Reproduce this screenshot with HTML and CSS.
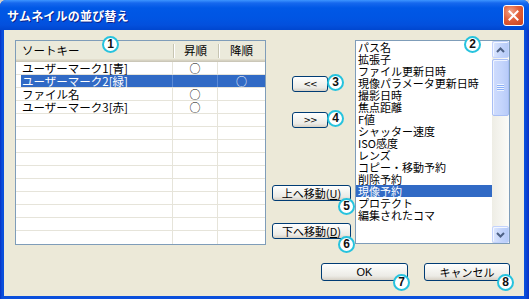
FILE: index.html
```html
<!DOCTYPE html>
<html lang="ja">
<head>
<meta charset="utf-8">
<title>サムネイルの並び替え</title>
<link rel="stylesheet" href="styles.css">
</head>
<body>
<div class="window">
  <div class="titlebar">
    <span class="title">サムネイルの並び替え</span>
    <button class="close" aria-label="閉じる">
      <svg width="11" height="11" viewBox="0 0 11 11"><path d="M1.5 1.5 L9.5 9.5 M9.5 1.5 L1.5 9.5" stroke="#fff" stroke-width="2" stroke-linecap="square"/></svg>
    </button>
  </div>
  <div class="body">
    <div class="toprow">
      <div class="table">
        <div class="thead">
          <div class="th c0">ソートキー</div>
          <div class="th c1 sep">昇順</div>
          <div class="th c2 sep">降順</div>
        </div>
        <div class="row"><div class="cell c0">ユーザーマーク1[青]</div><div class="cell c1">○</div><div class="cell c2"></div></div>
        <div class="row selected"><div class="cell c0">ユーザーマーク2[緑]</div><div class="cell c1"></div><div class="cell c2">○</div></div>
        <div class="row"><div class="cell c0">ファイル名</div><div class="cell c1">○</div><div class="cell c2"></div></div>
        <div class="row"><div class="cell c0">ユーザーマーク3[赤]</div><div class="cell c1">○</div><div class="cell c2"></div></div>
        <div class="row"><div class="cell c0"></div><div class="cell c1"></div><div class="cell c2"></div></div>
        <div class="row"><div class="cell c0"></div><div class="cell c1"></div><div class="cell c2"></div></div>
        <div class="row"><div class="cell c0"></div><div class="cell c1"></div><div class="cell c2"></div></div>
        <div class="row"><div class="cell c0"></div><div class="cell c1"></div><div class="cell c2"></div></div>
        <div class="row"><div class="cell c0"></div><div class="cell c1"></div><div class="cell c2"></div></div>
        <div class="row"><div class="cell c0"></div><div class="cell c1"></div><div class="cell c2"></div></div>
        <div class="row"><div class="cell c0"></div><div class="cell c1"></div><div class="cell c2"></div></div>
        <div class="row"><div class="cell c0"></div><div class="cell c1"></div><div class="cell c2"></div></div>
        <div class="row"><div class="cell c0"></div><div class="cell c1"></div><div class="cell c2"></div></div>
        <div class="row last"><div class="cell c0"></div><div class="cell c1"></div><div class="cell c2"></div></div>
      </div>
      <div class="mid">
        <button class="btn arrow first">&lt;&lt;</button>
        <button class="btn arrow second">&gt;&gt;</button>
        <button class="btn move up">上へ移動(<u>U</u>)</button>
        <button class="btn move down">下へ移動(<u>D</u>)</button>
      </div>
      <div class="listbox">
        <ul class="items">
          <li>パス名</li>
          <li>拡張子</li>
          <li>ファイル更新日時</li>
          <li>現像パラメータ更新日時</li>
          <li>撮影日時</li>
          <li>焦点距離</li>
          <li>F値</li>
          <li>シャッター速度</li>
          <li>ISO感度</li>
          <li>レンズ</li>
          <li>コピー・移動予約</li>
          <li>削除予約</li>
          <li class="sel">現像予約</li>
          <li>プロテクト</li>
          <li>編集されたコマ</li>
        </ul>
        <div class="scrollbar">
          <div class="sb-btn">
            <svg width="9" height="6" viewBox="0 0 9 6"><path d="M1 5 L4.5 1.5 L8 5" fill="none" stroke="#4D6185" stroke-width="2"/></svg>
          </div>
          <div class="sb-track">
            <div class="sb-thumb"><span class="grip"></span></div>
          </div>
          <div class="sb-btn">
            <svg width="9" height="6" viewBox="0 0 9 6"><path d="M1 1 L4.5 4.5 L8 1" fill="none" stroke="#4D6185" stroke-width="2"/></svg>
          </div>
        </div>
      </div>
    </div>
    <div class="bottom">
      <button class="btn big ok">OK</button>
      <button class="btn big cancel">キャンセル</button>
    </div>
  </div>
  <span class="callout n1">1</span>
  <span class="callout n2">2</span>
  <span class="callout n3">3</span>
  <span class="callout n4">4</span>
  <span class="callout n5">5</span>
  <span class="callout n6">6</span>
  <span class="callout n7">7</span>
  <span class="callout n8">8</span>
</div>
</body>
</html>
```

FILE: styles.css
```css
* { box-sizing: border-box; }

html, body {
  margin: 0;
  padding: 0;
  background: #d4d0c8;
}

.window {
  position: relative;
  width: 529px;
  height: 299px;
  display: flex;
  flex-direction: column;
  background: linear-gradient(to right, #0831c4 0px, #0a4fdc 2px, #0a4fdc 525px, #0831c4 529px);
  border-radius: 6px 6px 0 0;
  overflow: hidden;
  font-family: "Noto Sans CJK JP", "Liberation Sans", sans-serif;
  font-size: 11px;
  color: #000;
}

.titlebar {
  height: 30px;
  flex: none;
  display: flex;
  align-items: center;
  padding: 0 5px 0 7px;
  background: linear-gradient(#3d95ff 0px, #1668ee 3px, #0058e6 8px, #0055e3 18px, #0350dd 25px, #0046cf 30px);
}

.title {
  color: #fff;
  font-weight: bold;
  font-size: 12px;
  letter-spacing: 0.2px;
  text-shadow: 1px 1px 0 #0a1f8a;
  line-height: 14px;
  padding-top: 1px;
}

.close {
  margin-left: auto;
  width: 21px;
  height: 21px;
  padding: 0;
  border: 1px solid #fff;
  border-radius: 3px;
  background: radial-gradient(circle at 35% 30%, #f1a58a 0%, #e2603a 45%, #c9401c 100%);
  display: flex;
  align-items: center;
  justify-content: center;
  margin-top: 1px;
}

.body {
  flex: 1;
  margin: 0 5px 3px 4px;
  background: #ece9d8;
  padding: 10px 14px 0 11px;
  display: flex;
  flex-direction: column;
}

.toprow {
  display: flex;
  align-items: flex-start;
}

/* ---------- list view ---------- */
.table {
  width: 251px;
  border: 1px solid #7f9db9;
  background: #fff;
}

.thead {
  display: grid;
  grid-template-columns: 157px 45px 47px;
  height: 21px;
  background: #ebeadb;
  box-shadow: inset 0 -1px #cbc7b8, inset 0 -2px #d6d2c2, inset 0 -3px #e2decd;
}

.th {
  line-height: 18px;
  font-size: 11.5px;
  padding-bottom: 2px;
}

.th.c0 { padding-left: 6px; }
.th.c1, .th.c2 { text-align: center; }

.th.sep {
  background:
    linear-gradient(#c7c5b2, #c7c5b2) 0 3px / 1px 14px no-repeat,
    linear-gradient(#ffffff, #ffffff) 1px 3px / 1px 14px no-repeat;
}

.row {
  display: grid;
  grid-template-columns: 157px 45px 47px;
  height: 13px;
  border-bottom: 1px solid #e6e4da;
}

.row.last { border-bottom: none; }

.cell {
  line-height: 12px;
  font-size: 11.5px;
  white-space: nowrap;
}

.cell.c0 {
  padding-left: 6px;
  border-right: 1px solid #e6e4da;
}

.cell.c1 {
  text-align: center;
  border-right: 1px solid #e6e4da;
  font-size: 11px;
}

.cell.c2 {
  text-align: center;
  font-size: 11px;
}

.row.selected {
  color: #fff;
}

.row.selected .cell.c0 {
  background: linear-gradient(to right, #fff 0 5px, #316ac5 5px);
  border-right-color: #5b8ad6;
}

.row.selected .cell.c1 {
  background: #316ac5;
  border-right-color: #5b8ad6;
}

.row.selected .cell.c2 {
  background: #316ac5;
}

/* ---------- middle buttons ---------- */
.mid {
  width: 89px;
  display: flex;
  flex-direction: column;
  align-items: flex-start;
}

.btn {
  font-family: "Noto Sans CJK JP", "Liberation Sans", sans-serif;
  font-size: 11px;
  color: #000;
  padding: 0;
  border: 1px solid #003c74;
  border-radius: 3px;
  background: linear-gradient(#ffffff 0%, #f7f7f4 30%, #ecebe6 75%, #d6d0c5 100%);
  line-height: 14px;
  display: flex;
  align-items: center;
  justify-content: center;
  white-space: nowrap;
}

.btn u { text-decoration: underline; }

.arrow {
  width: 36px;
  height: 16px;
  margin-left: 26px;
  font-family: "DejaVu Sans", sans-serif;
  font-size: 9px;
  letter-spacing: -1px;
}

.arrow.first { margin-top: 36px; }
.arrow.second { margin-top: 20px; }

.move {
  width: 79px;
  height: 16px;
  margin-left: 6px;
  font-size: 11px;
}

.move.up { margin-top: 57px; }
.move.down { margin-top: 22px; }

/* ---------- list box ---------- */
.listbox {
  width: 155px;
  height: 204px;
  border: 1px solid #7f9db9;
  background: #fff;
  display: flex;
}

.items {
  list-style: none;
  margin: 0;
  padding: 0;
  flex: 1;
  font-size: 11px;
}

.items li {
  height: 12px;
  line-height: 12px;
  padding-left: 2px;
  white-space: nowrap;
}

.items li.sel {
  background: #316ac5;
  color: #fff;
}

.scrollbar {
  width: 17px;
  display: flex;
  flex-direction: column;
  background: linear-gradient(to right, #eeede5, #fbfbf8);
}

.sb-btn {
  height: 17px;
  flex: none;
  border: 1px solid #c3d3fd;
  border-radius: 2px;
  background: linear-gradient(to right, #dce6fd, #c1d3fb 60%, #b6cbf7);
  box-shadow: inset 1px 1px #f3f7ff;
  display: flex;
  align-items: center;
  justify-content: center;
}

.sb-track {
  flex: 1;
  display: flex;
  flex-direction: column;
}

.sb-thumb {
  height: 57px;
  margin-top: 1px;
  border: 1px solid #a8bef5;
  border-radius: 2px;
  background: linear-gradient(to right, #cfdcfd, #c3d4fc 60%, #b8cbf8);
  box-shadow: inset 1px 1px #eef3ff;
  display: flex;
  align-items: center;
  justify-content: center;
}

.grip {
  width: 7px;
  height: 7px;
  background: repeating-linear-gradient(#eef4fe 0 1px, #8cb0f8 1px 2px);
}

/* ---------- bottom buttons ---------- */
.bottom {
  margin-top: 18px;
  display: flex;
  justify-content: flex-end;
  gap: 16px;
}

.big {
  height: 18px;
  font-size: 11px;
}

.ok { width: 87px; font-family: "Liberation Sans", sans-serif; }
.cancel { width: 86px; }

/* ---------- numbered callouts ---------- */
.callout {
  position: absolute;
  width: 17px;
  height: 17px;
  border: 2px solid #27c3de;
  border-radius: 50%;
  background: #fff;
  color: #111;
  font-family: "Liberation Sans", sans-serif;
  font-weight: bold;
  font-size: 12px;
  line-height: 13px;
  text-align: center;
}

.n1 { left: 102px; top: 36px; }
.n2 { left: 464px; top: 36px; }
.n3 { left: 327px; top: 74px; }
.n4 { left: 327px; top: 110px; }
.n5 { left: 338px; top: 198px; }
.n6 { left: 338px; top: 236px; }
.n7 { left: 393px; top: 274px; }
.n8 { left: 497px; top: 274px; }
```
